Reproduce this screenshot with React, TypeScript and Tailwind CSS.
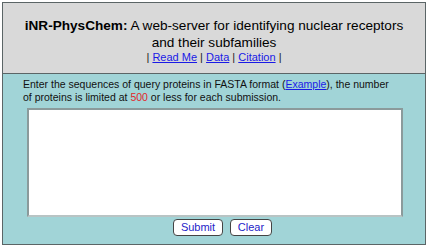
export default function App() {
  return (
    <div className="w-[430px] h-[249px] bg-white pt-[2px] pl-[2px] font-['Liberation_Sans',Arial,sans-serif]">
      <div className="w-[424px] border border-[#5b6566]">
        {/* header */}
        <div className="h-[71px] bg-[#d9d9d9] border-b border-[#5b6566] text-center pt-[14px]">
          <h1 className="text-[13.6px] leading-[17px] text-black">
            <b>iNR-PhysChem:</b> A web-server for identifying nuclear receptors
            <br />
            and their subfamilies
          </h1>
          <div className="text-[11px] leading-[13px] text-[#222]">
            | <a href="#" className="text-[#1a1ae6] underline">Read Me</a> |{' '}
            <a href="#" className="text-[#1a1ae6] underline">Data</a> |{' '}
            <a href="#" className="text-[#1a1ae6] underline">Citation</a> |
          </div>
        </div>

        {/* form */}
        <div className="bg-[#a1d4d7] h-[170px] pt-[4px]">
          <p className="pl-[20px] text-[10.5px] leading-[13px] text-[#111]">
            Enter the sequences of query proteins in FASTA format (
            <a href="#" className="text-[#1a1ae6] underline">Example</a>), the number
            <br />
            of proteins is limited at <span className="text-[#e0262a]">500</span> or less for each submission.
          </p>
          <textarea className="block mt-[4px] ml-[24px] w-[376px] h-[109px] bg-white border-2 border-[#8b9a9b] border-b-[#b8c4c4] resize-none" />
          <div className="flex justify-center gap-[7px] mt-[2px] pl-[17px]">
            <button className="h-[17px] w-[50px] rounded-[4px] border border-[#444] bg-white text-[11px] leading-none text-[#2424c8]">
              Submit
            </button>
            <button className="h-[17px] w-[42px] rounded-[4px] border border-[#444] bg-white text-[11px] leading-none text-[#2424c8]">
              Clear
            </button>
          </div>
        </div>
      </div>
    </div>
  );
}
